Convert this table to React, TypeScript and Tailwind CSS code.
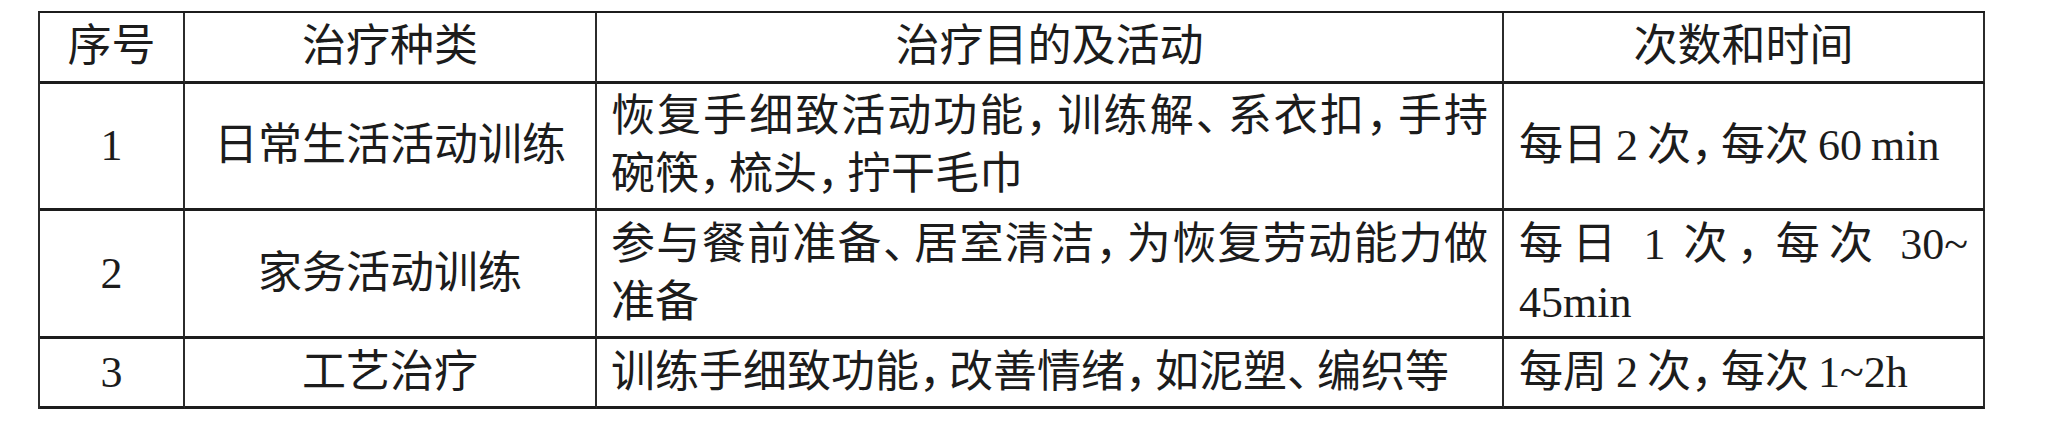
import { Fragment } from "react";

type Row = {
  no: string;
  kind: string;
  goal: string;
  freq: string;
};

const rows: Row[] = [
  {
    no: "1",
    kind: "日常生活活动训练",
    goal: "恢复手细致活动功能，训练解、系衣扣，手持碗筷，梳头，拧干毛巾",
    freq: "每日 2 次，每次 60 min",
  },
  {
    no: "2",
    kind: "家务活动训练",
    goal: "参与餐前准备、居室清洁，为恢复劳动能力做准备",
    freq: "每日 1 次，每次 30~|45min",
  },
  {
    no: "3",
    kind: "工艺治疗",
    goal: "训练手细致功能，改善情绪，如泥塑、编织等",
    freq: "每周 2 次，每次 1~2h",
  },
];

// 标点按半角宽度排
function fmt(text: string) {
  const parts = text.split(/([，、|])/);
  return parts.map((p, i) => {
    if (p === "，" || p === "、") {
      return (
        <span key={i} className="tracking-[-14px]">
          {p}
        </span>
      );
    }
    if (p === "|") return <wbr key={i} />;
    return <Fragment key={i}>{p}</Fragment>;
  });
}

const cell =
  "flex items-center border-r-2 border-b-[3px] border-r-[#2b2b2b] border-b-[#1c1c1c]";

export default function App() {
  return (
    <div className="h-[426px] bg-white pt-[11px] pl-[38px] font-['Liberation_Serif','Noto_Sans_CJK_SC',serif] text-[44px] text-[#1c1c1c]">
      <div className="grid w-fit grid-cols-[145px_412px_907px_481px] grid-rows-[71px_127px_128px_70px] border-t-2 border-l-2 border-t-[#1c1c1c] border-l-[#2b2b2b]">
        <div className={`${cell} justify-center`}>序号</div>
        <div className={`${cell} justify-center`}>治疗种类</div>
        <div className={`${cell} justify-center`}>治疗目的及活动</div>
        <div className={`${cell} justify-center`}>次数和时间</div>

        {rows.map((r) => (
          <Fragment key={r.no}>
            <div className={`${cell} justify-center`}>{r.no}</div>
            <div className={`${cell} justify-center`}>{r.kind}</div>
            <div className={`${cell} px-[14px]`}>
              <div className="w-full text-justify leading-[58px]">
                {fmt(r.goal)}
              </div>
            </div>
            <div className={`${cell} pl-[15px] pr-[15px]`}>
              <div className="w-full text-justify leading-[58px] [word-spacing:-2px]">
                {fmt(r.freq)}
              </div>
            </div>
          </Fragment>
        ))}
      </div>
    </div>
  );
}
